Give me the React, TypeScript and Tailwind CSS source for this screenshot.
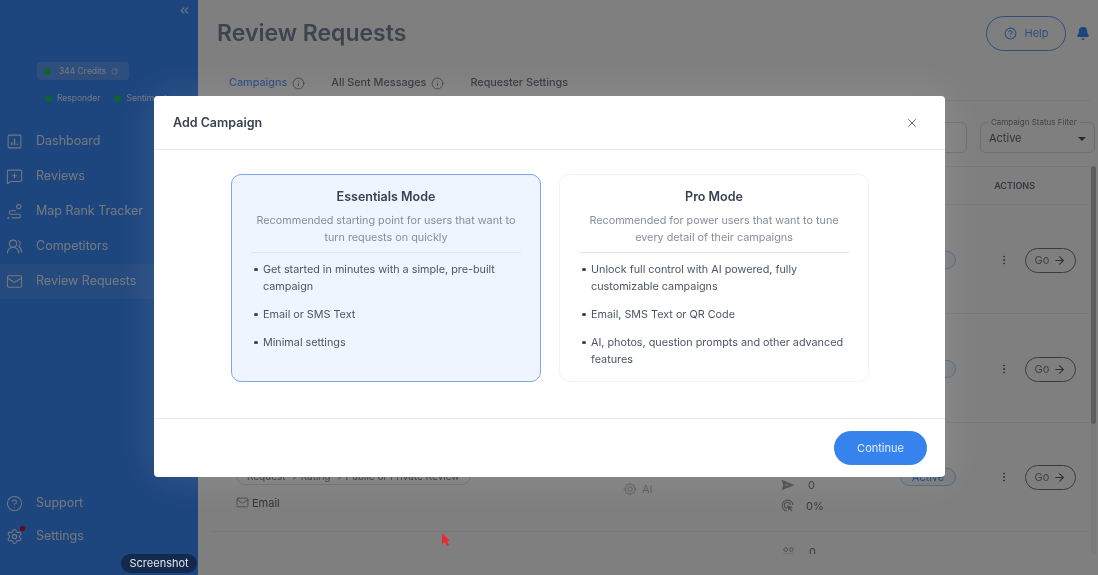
import React from 'react';
import {
  ArrowRight,
  Bell,
  ChevronsLeft,
  CircleHelp,
  EllipsisVertical,
  Info,
  Mail,
  MessageSquarePlus,
  RotateCw,
  Settings,
  UsersRound,
  X,
} from 'lucide-react';

type IconProps = { className?: string; strokeWidth?: number };

const ChartBoxIcon = ({ className, strokeWidth = 1.5 }: IconProps) => (
  <svg className={className} viewBox="0 0 24 24" fill="none" stroke="currentColor" strokeWidth={strokeWidth}>
    <rect x="3" y="3" width="18" height="18" rx="1.5" />
    <path d="M8 17v-4M12 17V8M16 17v-2" strokeWidth={2} />
  </svg>
);

const RouteDotIcon = ({ className, strokeWidth = 1.5 }: IconProps) => (
  <svg className={className} viewBox="0 0 24 24" fill="none" stroke="currentColor" strokeWidth={strokeWidth}>
    <circle cx="18" cy="5" r="3" />
    <path d="M14 11H7a2.5 2.5 0 0 0 0 5h11a2.5 2.5 0 0 1 0 5H8" />
    <path d="M3 21h.5" strokeWidth={2.5} strokeLinecap="round" />
  </svg>
);

const ChipIcon = ({ className }: IconProps) => (
  <svg className={className} viewBox="0 0 24 24" fill="none" stroke="currentColor" strokeWidth={1.6}>
    <circle cx="12" cy="12" r="8.5" />
    <rect x="8.5" y="8.5" width="7" height="7" rx="1" />
    <path d="M12 1v2.5M12 20.5V23M1 12h2.5M20.5 12H23M4.2 4.2l1.8 1.8M18 18l1.8 1.8M19.800 4.200 18 6M6 18l-1.800 1.800" />
  </svg>
);

const PlaneIcon = ({ className }: IconProps) => (
  <svg className={className} viewBox="0 0 24 24" fill="currentColor">
    <path d="M1 3l22 9-22 9 3-9zM6.500 11h6v2h-6z" fillRule="evenodd" />
  </svg>
);

const ClickRateIcon = ({ className }: IconProps) => (
  <svg className={className} viewBox="0 0 24 24" fill="none" stroke="currentColor" strokeWidth={2}>
    <path d="M11 22a10 10 0 1 1 11-11" />
    <path d="M11 17a5.500 5.500 0 1 1 6-6" />
    <path d="M11 11l11 4-4.500 2 3.500 4-2 1.500-3.500-4-2 3z" fill="currentColor" stroke="none" />
  </svg>
);

const HeadsIcon = ({ className }: IconProps) => (
  <svg className={className} viewBox="0 0 14 8" fill="none" stroke="currentColor" strokeWidth={1}>
    <circle cx="4" cy="2.500" r="2" />
    <circle cx="10" cy="2.500" r="2" />
    <path d="M1 7.500h12" />
  </svg>
);

const navItems = [
  { label: 'Dashboard', icon: ChartBoxIcon },
  { label: 'Reviews', icon: MessageSquarePlus },
  { label: 'Map Rank Tracker', icon: RouteDotIcon },
  { label: 'Competitors', icon: UsersRound },
  { label: 'Review Requests', icon: Mail, active: true },
];

const modes = [
  {
    title: 'Essentials Mode',
    blurb: 'Recommended starting point for users that want to turn requests on quickly',
    points: ['Get started in minutes with a simple, pre-built campaign', 'Email or SMS Text', 'Minimal settings'],
    selected: true,
  },
  {
    title: 'Pro Mode',
    blurb: 'Recommended for power users that want to tune every detail of their campaigns',
    points: [
      'Unlock full control with AI powered, fully customizable campaigns',
      'Email, SMS Text or QR Code',
      'AI, photos, question prompts and other advanced features',
    ],
    selected: false,
  },
];

const Sidebar = () => (
  <aside className="w-[198px] shrink-0 h-full bg-[#3a8bfd] text-white flex flex-col">
    <div className="flex justify-end pt-[4px] pr-[7px] h-[62px]">
      <ChevronsLeft className="w-[13px] h-[13px] text-[#dce9fd]" />
    </div>
    <div className="ml-[37px] w-[92px] h-[18px] rounded bg-[#5c9ffb] flex items-center pl-[7px] text-[8.500px] text-[#e3eefd]">
      <span className="w-[7px] h-[7px] rounded-full bg-[#22c55e] mr-[8px]" />
      344 Credits
      <RotateCw className="w-[7px] h-[7px] ml-[5px]" />
    </div>
    <div className="mt-[12px] ml-[45px] flex items-center text-[8.500px] text-[#e3eefd] whitespace-nowrap overflow-hidden">
      <span className="w-[7px] h-[7px] rounded-full bg-[#22c55e] mr-[5px]" />
      Responder
      <span className="w-[7px] h-[7px] rounded-full bg-[#22c55e] ml-[14px] mr-[5px]" />
      Sentiment
    </div>
    <nav className="mt-[19px] flex flex-col">
      {navItems.map(({ label, icon: Icon, active }) => (
        <div key={label} className={`h-[35px] flex items-center pl-[6px] text-[12.500px] text-[#e9f0fb] ${active ? 'bg-[#4a94fd]' : ''}`}>
          <Icon className="w-[17px] h-[17px] mr-[13px]" strokeWidth={1.5} />
          {label}
        </div>
      ))}
    </nav>
    <div className="mt-auto pb-[30px] flex flex-col gap-[16px] text-[12.500px] text-[#e9f0fb]">
      <div className="h-[17px] flex items-center pl-[6px]">
        <CircleHelp className="w-[17px] h-[17px] mr-[13px]" strokeWidth={1.5} />
        Support
      </div>
      <div className="h-[17px] flex items-center pl-[6px] relative">
        <Settings className="w-[17px] h-[17px] mr-[13px]" strokeWidth={1.5} />
        Settings
        <span className="absolute left-[20px] -top-[2px] w-[5px] h-[5px] rounded-full bg-red-600" />
      </div>
    </div>
  </aside>
);

const TableRow = ({ pill, channel }: { pill?: string; channel?: string }) => (
  <div className={`h-[109px] border-b border-[#eeeeee] flex pl-[24px] ${channel ? '' : 'pt-[2px]'}`}>
    <div className="w-[387px] flex flex-col justify-end pb-[20px] gap-[10px]">
      {pill && (
        <span className="self-start h-[18px] rounded-full border border-[#dddddd] px-[10px] text-[10px] leading-[16px] text-[#777777] whitespace-nowrap">
          {pill}
        </span>
      )}
      {channel && (
        <span className="flex items-center gap-[3px] text-[11px] text-[#666666]">
          <Mail className="w-[13px] h-[13px] text-[#888888]" strokeWidth={1.5} />
          {channel}
        </span>
      )}
    </div>
    <div className="w-[158px] flex items-center gap-[5px] pt-[24px] text-[11px] text-[#b5b5b5]">
      {channel && (
        <>
          <ChipIcon className="w-[14px] h-[14px]" />
          AI
        </>
      )}
    </div>
    <div className="w-[119px] flex flex-col justify-end pb-[17px] gap-[4.500px] text-[11px] text-[#777777]">
      {channel && (
        <>
          <span className="flex items-center gap-[13px]">
            <PlaneIcon className="w-[14px] h-[14px] text-[#999999]" />0
          </span>
          <span className="flex items-center gap-[12px]">
            <ClickRateIcon className="w-[13px] h-[13px] text-[#999999]" />0%
          </span>
        </>
      )}
    </div>
    <div className="flex items-center flex-1">
      <span className="w-[56px] h-[18px] rounded-full border border-[#a9ccf8] bg-[#f3f8ff] text-center text-[11px] leading-[16px] text-[#3a8bfd]">
        {channel ? 'Active' : ''}
      </span>
      <EllipsisVertical className="w-[12px] h-[12px] ml-[42px] mr-[15px] text-[#555555]" />
      <span className="w-[51px] h-[25px] rounded-full border border-[#777777] flex items-center justify-center gap-[4px] text-[11px] text-[#888888]">
        Go <ArrowRight className="w-[13px] h-[13px] text-[#666666]" />
      </span>
    </div>
  </div>
);

const Main = () => (
  <main className="flex-1 min-w-0 h-full bg-white flex flex-col overflow-hidden">
    <header className="h-[66px] shrink-0 flex items-center pl-[19px] pr-[8px]">
      <h1 className="text-[23px] font-semibold text-[#7d899c] flex-1">Review Requests</h1>
      <button className="w-[80px] h-[35px] rounded-full border border-[#5c9ffb] flex items-center justify-center gap-[8px] text-[11px] text-[#5c9ffb]">
        <CircleHelp className="w-[13px] h-[13px]" />
        Help
      </button>
      <Bell className="w-[14px] h-[15px] ml-[10px] text-[#3a8bfd] fill-[#3a8bfd]" />
    </header>
    <div className="h-[35px] shrink-0 mr-[8px] ml-[18px] border-b border-[#eeeeee] flex items-center text-[10.800px] font-medium text-[#6b7280] pl-[13px] pt-[1px]">
      <span className="text-[#5a9cfb]">Campaigns</span>
      <Info className="w-[13px] h-[13px] ml-[5px] mr-[26px]" strokeWidth={1.5} />
      <span>All Sent Messages</span>
      <Info className="w-[13px] h-[13px] ml-[5px] mr-[26px]" strokeWidth={1.5} />
      <span>Requester Settings</span>
    </div>
    <div className="h-[65px] shrink-0 flex items-start justify-end gap-[13px] pt-[21px] pr-[3px]">
      <div className="w-[100px] h-[31px] rounded-md border border-[#dddddd]" />
      <div className="relative w-[115px] h-[31px] rounded-md border border-[#dddddd] flex items-center justify-between pt-[2px] px-[8px] text-[11px] text-[#666666]">
        <span className="absolute -top-[5px] left-[7px] bg-white px-[3px] text-[8px] leading-[9px] text-[#888888] whitespace-nowrap">
          Campaign Status Filter
        </span>
        Active
        <span className="w-0 h-0 border-x-[4px] border-x-transparent border-t-[4px] border-t-[#555555]" />
      </div>
    </div>
    <div className="flex-1 flex items-start min-h-0 pl-[14px]">
      <div className="flex-1 min-w-0 h-[388px] overflow-hidden">
        <div className="h-[39px] border-y border-[#eeeeee] flex items-center justify-end pr-[54px] text-[9px] font-semibold text-[#6b7280]">
          ACTIONS
        </div>
        <TableRow />
        <TableRow />
        <TableRow pill="Request → Rating → Public or Private Review" channel="Email" />
        <div className="pl-[570px] pt-[14px] flex items-start gap-[14px] text-[11px] leading-[13px] text-[#777777]">
          <HeadsIcon className="w-[13px] h-[8px] mt-[1px] text-[#999999]" />0
        </div>
      </div>
      <div className="w-[5px] h-[388px] mx-[2px] bg-[#f4f4f4] rounded-full">
        <div className="h-[258px] bg-[#bdbdbd] rounded-full" />
      </div>
    </div>
  </main>
);

const ModeCard = ({ title, blurb, points, selected }: (typeof modes)[number]) => (
  <div
    className={`w-[310px] h-[208px] rounded-[10px] border px-[19px] pt-[13px] ${
      selected ? 'bg-[#eff5ff] border-[#7ea6ee]' : 'bg-white border-[#f1f3f6]'
    }`}
  >
    <h3 className="text-center text-[12.500px] font-semibold leading-[18px] text-[#374151]">{title}</h3>
    <p className="mt-[6px] pb-[6px] px-[2px] border-b border-[#dfe5ec] text-center text-[10.800px] leading-[17px] text-[#868d9b]">{blurb}</p>
    <ul className="mt-[7.500px] flex flex-col gap-[11px] pl-[3px] text-[10.800px] leading-[17px] text-[#4b5563]">
      {points.map((point) => (
        <li key={point} className="flex">
          <span className="w-[3.500px] h-[3.500px] shrink-0 rounded-full bg-[#374151] mt-[7px] mr-[5.500px]" />
          <span>{point}</span>
        </li>
      ))}
    </ul>
  </div>
);

export default function App() {
  return (
    <div className="relative w-[1098px] h-[575px] overflow-hidden flex blur-[0.4px] font-['Inter',sans-serif]">
      <Sidebar />
      <Main />
      <div className="absolute inset-0 bg-black/50" />
      <span className="absolute left-[121px] top-[554px] h-[19px] px-[8.500px] rounded-full bg-[#13294d] text-[11px] leading-[19px] text-[#e5e7eb]">
        Screenshot
      </span>
      <svg className="absolute left-[441px] top-[532px] w-[10px] h-[15px]" viewBox="0 0 10 15">
        <path d="M1 1v11l3-2 2 4 2-1-2-4h3z" fill="#f0262d" />
      </svg>
      <section className="absolute left-[154px] top-[96px] w-[791px] h-[381px] rounded-[4px] bg-white flex flex-col shadow-[0_0_40px_rgba(255,255,255,0.12)]">
        <div className="h-[54px] shrink-0 border-b border-[#e8ebef] flex items-center justify-between pl-[19px] pr-[26px] pt-[1px]">
          <h2 className="text-[12.500px] font-semibold text-[#374151]">Add Campaign</h2>
          <X className="w-[14px] h-[14px] text-[#4b5563]" strokeWidth={1.5} />
        </div>
        <div className="h-[269px] shrink-0 border-b border-[#e8ebef] flex justify-center gap-[18px] pt-[24px] pl-[1px]">
          {modes.map((mode) => (
            <ModeCard key={mode.title} {...mode} />
          ))}
        </div>
        <div className="flex-1 flex items-center justify-end pr-[18px]">
          <button className="w-[93px] h-[34px] rounded-full bg-[#3783ed] text-[11px] text-[#e6effd]">Continue</button>
        </div>
      </section>
    </div>
  );
}
